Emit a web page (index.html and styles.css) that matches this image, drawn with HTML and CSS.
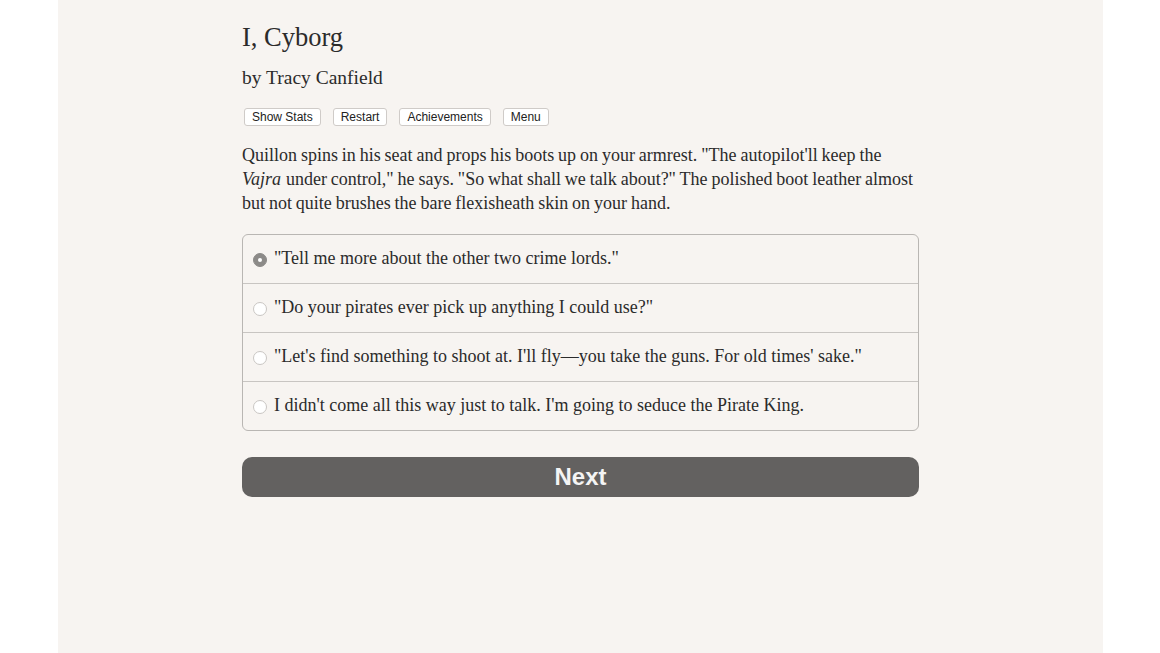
FILE: index.html
```html
<!DOCTYPE html>
<html lang="en">
<head>
<meta charset="UTF-8">
<title>I, Cyborg</title>
<link rel="stylesheet" href="styles.css">
</head>
<body>
<div class="page">
    <div class="content">
        <h1 class="title">I, Cyborg</h1>
        <h2 class="author">by Tracy Canfield</h2>
        <div class="controls">
            <button>Show Stats</button>
            <button>Restart</button>
            <button>Achievements</button>
            <button>Menu</button>
        </div>
        <p class="story">Quillon spins in his seat and props his boots up on your armrest. "The autopilot'll keep the <i>Vajra</i> under control," he says. "So what shall we talk about?" The polished boot leather almost but not quite brushes the bare flexisheath skin on your hand.</p>
        <form class="choices">
            <label class="choice"><span class="radio checked"></span>"Tell me more about the other two crime lords."</label>
            <label class="choice"><span class="radio"></span>"Do your pirates ever pick up anything I could use?"</label>
            <label class="choice"><span class="radio"></span>"Let's find something to shoot at. I'll fly—you take the guns. For old times' sake."</label>
            <label class="choice"><span class="radio"></span>I didn't come all this way just to talk. I'm going to seduce the Pirate King.</label>
        </form>
        <button class="next">Next</button>
    </div>
</div>
</body>
</html>
```

FILE: styles.css
```css
body{margin:0;background:#fff;font-family:"Liberation Serif","Times New Roman",serif;color:#2b2b2b}
.page{width:1045px;min-height:653px;margin-left:58px;background:#f7f4f1;overflow:hidden}
.content{width:677px;margin-left:184px;padding-top:20px}
.title{margin:0;font-size:26.5px;font-weight:normal;line-height:34px}
.author{margin:11px 0 0;font-size:19.5px;font-weight:normal;line-height:26px}
.controls{margin-top:17px;display:flex;gap:12px;padding-left:2px}
.controls button{height:18px;padding:0 7px;border:1px solid #cfcbc8;border-radius:3px;background:#fff;font-family:"Liberation Sans",Arial,sans-serif;font-size:12px;color:#222;line-height:16px}
.story{margin:17px 0 0;font-size:18px;line-height:24px;word-spacing:-0.6px}
.story i{padding-right:1px}
.choices{margin-top:19px;border:1px solid #b9b6b3;border-radius:6px;overflow:hidden}
.choice{display:flex;align-items:center;height:49px;padding:0 0 2px 10px;box-sizing:border-box;font-size:18px;border-top:1px solid #c8c5c2}
.choice:first-child{border-top:none;height:48px}
.radio{width:14px;height:14px;margin-right:7px;margin-top:3px;border-radius:50%;border:1px solid #c9c6c3;background:#fff;box-sizing:border-box;flex:none}
.radio.checked{background:#8c8a88;border-color:#8c8a88;position:relative}
.radio.checked::after{content:"";position:absolute;left:4px;top:4px;width:4px;height:4px;border-radius:50%;background:#fff}
.next{display:block;width:100%;height:40px;margin-top:26px;border:none;border-radius:10px;background:#636160;color:#f4f4f4;font-family:"Liberation Sans",Arial,sans-serif;font-weight:bold;font-size:24px}
```
